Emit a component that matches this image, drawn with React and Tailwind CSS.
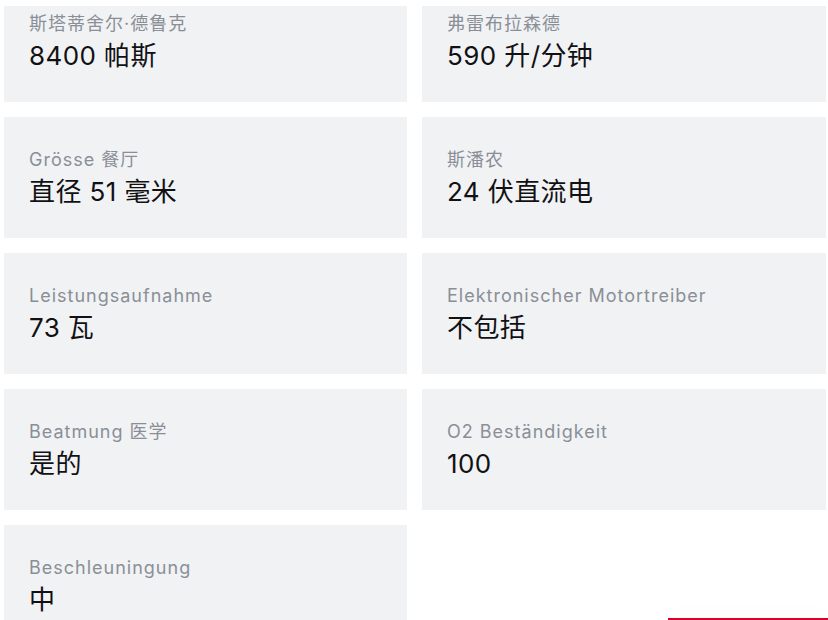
import React from "react";

const specs = [
  { label: "斯塔蒂舍尔·德鲁克", value: "8400 帕斯" },
  { label: "弗雷布拉森德", value: "590 升/分钟" },
  { label: "Grösse 餐厅", value: "直径 51 毫米" },
  { label: "斯潘农", value: "24 伏直流电" },
  { label: "Leistungsaufnahme", value: "73 瓦" },
  { label: "Elektronischer Motortreiber", value: "不包括" },
  { label: "Beatmung 医学", value: "是的" },
  { label: "O2 Beständigkeit", value: "100" },
  { label: "Beschleuningung", value: "中" },
];

function SpecCard({ label, value }) {
  return (
    <div className="h-[121px] bg-[#f1f2f4] pl-[25px] pt-[29px]">
      <p className="text-[18px] leading-[27px] tracking-[1px] text-[#8a8f97]">
        {label}
      </p>
      <p className="mt-[3px] text-[26px] leading-[32px] tracking-[0.4px] text-[#111114]">
        {value}
      </p>
    </div>
  );
}

export default function App() {
  return (
    <div
      className="relative h-[620px] w-[828px] overflow-hidden bg-white pt-[6px]"
      style={{ fontFamily: "Inter, 'Noto Sans CJK SC', sans-serif" }}
    >
      <div className="h-[614px] overflow-hidden">
        <div className="-mt-[25px] grid grid-cols-[403px_404px] gap-[15px] pl-[4px]">
          {specs.map((s) => (
            <SpecCard key={s.label} label={s.label} value={s.value} />
          ))}
        </div>
      </div>
      {/* bottom fixed button edge */}
      <div className="absolute bottom-0 right-0 h-[2px] w-[160px] bg-[#d7002b] shadow-[0_-6px_14px_rgba(0,0,0,0.06)]" />
    </div>
  );
}
